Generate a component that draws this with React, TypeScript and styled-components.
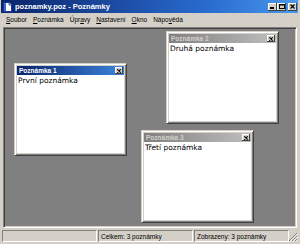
import React from 'react';
import styled, { createGlobalStyle } from 'styled-components';

const Global = createGlobalStyle`
  html, body { margin: 0; padding: 0; background: #D4D0C8; overflow: hidden; }
  body { font-family: "Liberation Sans", Arial, sans-serif; }
`;

const Window = styled.div`
  width: 300px;
  height: 244px;
  box-sizing: border-box;
  display: flex;
  flex-direction: column;
  background: #D4D0C8;
  padding: 0 2px 0 1px;
`;

const TitleBar = styled.div`
  height: 13px;
  flex: none;
  display: flex;
  align-items: center;
  gap: 3px;
  padding: 0 1px 0 2px;
  background: linear-gradient(to right, #0A246A 0%, #2A6CD0 70%, #4A98EA 100%);
`;

const Title = styled.span`
  flex: 1;
  color: #fff;
  font: bold 7.5px "Liberation Sans", Arial, sans-serif;
  white-space: nowrap;
`;

const CaptionButtons = styled.div`
  display: flex;
  align-items: center;
`;

const CapButton = styled.div<{ $gap?: boolean }>`
  width: 9px;
  height: 8px;
  box-sizing: border-box;
  background: #D4D0C8;
  box-shadow: inset -1px -1px #404040, inset 1px 1px #fff;
  margin-left: ${p => (p.$gap ? '2px' : '0')};
  display: flex;
  align-items: center;
  justify-content: center;
`;

const MenuBar = styled.div`
  height: 13px;
  flex: none;
  display: flex;
  align-items: center;
  gap: 6px;
  padding-left: 5px;
  font: 6.5px "Liberation Sans", Arial, sans-serif;
  color: #000;
`;

const MenuItem = styled.span`
  white-space: nowrap;
  u { text-decoration: underline; text-underline-offset: 1px; }
`;

const Client = styled.div`
  flex: 1;
  position: relative;
  margin: 1px 1px 0 2px;
  background: #808080;
  border: 1px solid;
  border-color: #808080 #fff #fff #808080;
  box-shadow: inset 1px 1px #404040, inset -1px -1px #D4D0C8;
`;

const Note = styled.div`
  position: absolute;
  width: 113px;
  height: 93px;
  box-sizing: border-box;
  background: #D4D0C8;
  border: 1px solid;
  border-color: #D4D0C8 #404040 #404040 #D4D0C8;
  box-shadow: inset 1px 1px #fff, inset -1px -1px #808080;
  padding: 2px;
  display: flex;
  flex-direction: column;
`;

const NoteTitle = styled.div<{ $active?: boolean }>`
  height: 9px;
  flex: none;
  display: flex;
  align-items: center;
  padding: 0 1px 0 2px;
  background: ${p =>
    p.$active
      ? 'linear-gradient(to right, #0A246A, #3C84DC)'
      : 'linear-gradient(to right, #808080, #BEBEBE)'};
  color: ${p => (p.$active ? '#fff' : '#D4D0C8')};
  font: bold 6.5px "Liberation Sans", Arial, sans-serif;
`;

const NoteTitleText = styled.span`
  flex: 1;
  white-space: nowrap;
`;

const NoteClose = styled.div`
  width: 8px;
  height: 7px;
  box-sizing: border-box;
  background: #D4D0C8;
  box-shadow: inset -1px -1px #404040, inset 1px 1px #fff;
  display: flex;
  align-items: center;
  justify-content: center;
`;

const NoteBody = styled.div`
  flex: 1;
  background: #fff;
  padding: 1px 0 0 1px;
  font: 7.5px "DejaVu Sans", sans-serif;
  color: #000;
  white-space: nowrap;
`;

const StatusBar = styled.div`
  height: 16px;
  flex: none;
  display: flex;
  align-items: flex-start;
  padding-top: 2px;
  box-sizing: border-box;
  margin-left: 1px;
  gap: 1px;
  position: relative;
`;

const Pane = styled.div<{ $w: number }>`
  width: ${p => p.$w}px;
  height: 12px;
  box-sizing: border-box;
  border: 1px solid;
  border-color: #808080 #fff #fff #808080;
  font: 6.5px "Liberation Sans", Arial, sans-serif;
  color: #000;
  display: flex;
  align-items: center;
  padding-left: 2px;
  white-space: nowrap;
`;

const Grip = styled.svg`
  position: absolute;
  right: 0;
  bottom: 2px;
`;

const Glyph = ({ kind }: { kind: 'min' | 'max' | 'close' }) => {
  if (kind === 'min') {
    return (
      <svg width="5" height="5" viewBox="0 0 5 5">
        <rect x="0" y="3" width="4" height="2" fill="#000" />
      </svg>
    );
  }
  if (kind === 'max') {
    return (
      <svg width="6" height="5" viewBox="0 0 6 5">
        <rect x="0.5" y="0.5" width="5" height="4" fill="none" stroke="#000" strokeWidth="1" />
        <rect x="0" y="0" width="6" height="1.5" fill="#000" />
      </svg>
    );
  }
  return (
    <svg width="5" height="5" viewBox="0 0 5 5">
      <path d="M0.5 0.5 L4.5 4.5 M4.5 0.5 L0.5 4.5" stroke="#000" strokeWidth="1.2" />
    </svg>
  );
};

const SmallX = () => (
  <svg width="4" height="4" viewBox="0 0 4 4">
    <path d="M0.3 0.3 L3.7 3.7 M3.7 0.3 L0.3 3.7" stroke="#000" strokeWidth="1.1" />
  </svg>
);

const AppIcon = () => (
  <svg width="9" height="10" viewBox="0 0 9 10">
    <path d="M0.5 0.5 H6 L8.5 3 V9.5 H0.5 Z" fill="#fff" stroke="#1A3A9A" strokeWidth="1" />
    <rect x="1" y="1" width="2" height="8" fill="#3A6AD8" />
    <path d="M6 0.5 V3 H8.5" fill="#C8D8F0" stroke="#1A3A9A" strokeWidth="0.8" />
  </svg>
);

type NoteData = { title: string; text: string; left: number; top: number; active?: boolean };

const notes: NoteData[] = [
  { title: 'Poznámka 2', text: 'Druhá poznámka', left: 162, top: 3 },
  { title: 'Poznámka 3', text: 'Třetí poznámka', left: 137, top: 102 },
  { title: 'Poznámka 1', text: 'První poznámka', left: 10, top: 35, active: true },
];

export default function App() {
  return (
    <>
      <Global />
      <Window>
        <TitleBar>
          <AppIcon />
          <Title>poznamky.poz - Poznámky</Title>
          <CaptionButtons>
            <CapButton><Glyph kind="min" /></CapButton>
            <CapButton><Glyph kind="max" /></CapButton>
            <CapButton $gap><Glyph kind="close" /></CapButton>
          </CaptionButtons>
        </TitleBar>
        <MenuBar>
          <MenuItem><u>S</u>oubor</MenuItem>
          <MenuItem><u>P</u>oznámka</MenuItem>
          <MenuItem>Úpr<u>a</u>vy</MenuItem>
          <MenuItem><u>N</u>astavení</MenuItem>
          <MenuItem><u>O</u>kno</MenuItem>
          <MenuItem>Nápo<u>v</u>ěda</MenuItem>
        </MenuBar>
        <Client>
          {notes.map(n => (
            <Note key={n.title} style={{ left: n.left, top: n.top }}>
              <NoteTitle $active={n.active}>
                <NoteTitleText>{n.title}</NoteTitleText>
                <NoteClose><SmallX /></NoteClose>
              </NoteTitle>
              <NoteBody>{n.text}</NoteBody>
            </Note>
          ))}
        </Client>
        <StatusBar>
          <Pane $w={95} />
          <Pane $w={95}>Celkem: 3 poznámky</Pane>
          <Pane $w={95}>Zobrazeny: 3 poznámky</Pane>
          <Grip width="10" height="10" viewBox="0 0 10 10">
            <path d="M9 1 L1 9 M9 4 L4 9 M9 7 L7 9" stroke="#808080" strokeWidth="1" />
            <path d="M9.8 1.8 L1.8 9.8 M9.8 4.8 L4.8 9.8 M9.8 7.8 L7.8 9.8" stroke="#fff" strokeWidth="0.8" />
          </Grip>
        </StatusBar>
      </Window>
    </>
  );
}
